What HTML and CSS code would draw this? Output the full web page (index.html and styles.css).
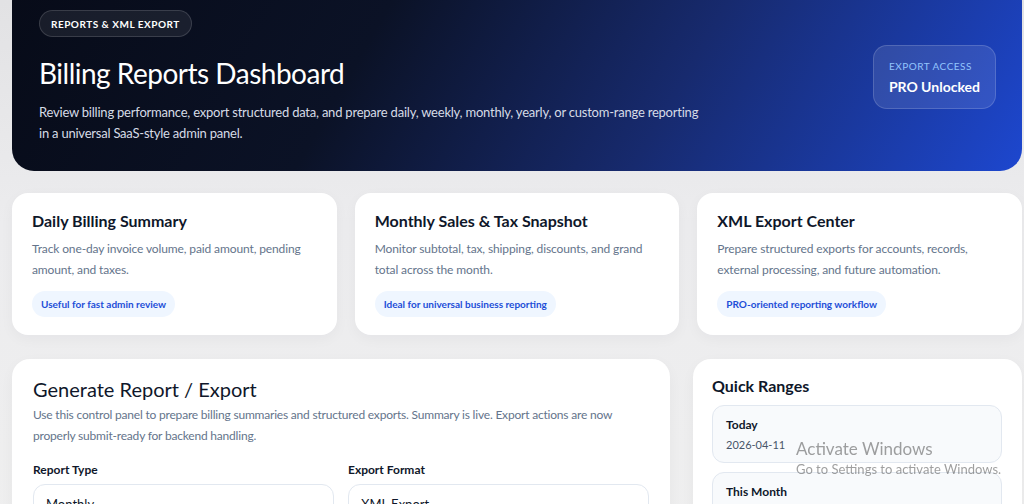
FILE: index.html
```html
<!DOCTYPE html>
<html lang="en">
<head>
    <meta charset="UTF-8">
    <meta name="viewport" content="width=device-width, initial-scale=1.0">
    <title>Billing Reports Dashboard</title>
    <link rel="stylesheet" href="styles.css">
</head>
<body>

    <div class="page">
        <!-- Hero banner -->
        <section class="hero">
            <div class="hero-text">
                <span class="hero-pill">Reports &amp; XML Export</span>
                <h1 class="hero-title">Billing Reports Dashboard</h1>
                <p class="hero-desc">
                    Review billing performance, export structured data, and prepare daily, weekly, monthly, yearly, or custom-range reporting
                    in a universal SaaS-style admin panel.
                </p>
            </div>
            <div class="access-box">
                <div class="access-label">Export Access</div>
                <div class="access-value">PRO Unlocked</div>
            </div>
        </section>

        <!-- Info cards -->
        <div class="info-grid">
            <div class="info-card">
                <h3>Daily Billing Summary</h3>
                <p>Track one-day invoice volume, paid amount, pending amount, and taxes.</p>
                <span class="tag">Useful for fast admin review</span>
            </div>
            <div class="info-card">
                <h3>Monthly Sales &amp; Tax Snapshot</h3>
                <p>Monitor subtotal, tax, shipping, discounts, and grand total across the month.</p>
                <span class="tag">Ideal for universal business reporting</span>
            </div>
            <div class="info-card">
                <h3>XML Export Center</h3>
                <p>Prepare structured exports for accounts, records, external processing, and future automation.</p>
                <span class="tag">PRO-oriented reporting workflow</span>
            </div>
        </div>

        <!-- Report form + quick ranges -->
        <div class="main-grid">
            <div class="panel form-panel">
                <h2>Generate Report / Export</h2>
                <p class="panel-desc">
                    Use this control panel to prepare billing summaries and structured exports. Summary is live. Export actions are now
                    properly submit-ready for backend handling.
                </p>
                <div class="form-row">
                    <div class="field">
                        <label>Report Type</label>
                        <div class="select">Monthly</div>
                    </div>
                    <div class="field">
                        <label>Export Format</label>
                        <div class="select">XML Export</div>
                    </div>
                </div>
            </div>

            <div class="panel ranges-panel">
                <h3>Quick Ranges</h3>
                <div class="range-item">
                    <strong>Today</strong>
                    <span>2026-04-11</span>
                </div>
                <div class="range-item">
                    <strong>This Month</strong>
                    <span>2026-04-01 to 2026-04-30</span>
                </div>
            </div>
        </div>
    </div>

    <div class="activate">
        <div class="activate-title">Activate Windows</div>
        <div class="activate-sub">Go to Settings to activate Windows.</div>
    </div>

</body>
</html>
```

FILE: styles.css
```css
body {
    margin: 0;
    font-family: Lato, "Noto Sans", sans-serif;
    background: linear-gradient(180deg, #e2e2e4 0%, #ececee 40%, #efefef 100%);
    color: #0f172a;
    overflow: hidden;
}

.page {
    margin-top: -20px;
    padding: 0 2px 0 12px;
}

/* hero */
.hero {
    display: flex;
    justify-content: space-between;
    align-items: center;
    padding: 30px 26px 27px 27px;
    border-radius: 22px;
    background: linear-gradient(120deg, #070b18 0%, #0b1226 35%, #172a6e 65%, #1d47cf 100%);
    color: white;
}

.hero-pill {
    display: inline-flex;
    align-items: center;
    height: 25px;
    padding: 0 11px;
    border-radius: 999px;
    background: rgba(255, 255, 255, 0.07);
    border: 1px solid rgba(255, 255, 255, 0.14);
    font-size: 10px;
    font-weight: 700;
    letter-spacing: 0.5px;
    text-transform: uppercase;
}

.hero-title {
    margin: 19px 0 12px;
    font-size: 28px;
    font-weight: 400;
    line-height: 34px;
    letter-spacing: -0.5px;
}

.hero-desc {
    margin: 0;
    max-width: 665px;
    font-size: 13px;
    line-height: 21px;
    letter-spacing: -0.22px;
    color: #d6dbe6;
}

.access-box {
    padding: 14px 15px 13px;
    border-radius: 14px;
    background: rgba(255, 255, 255, 0.1);
    border: 1px solid rgba(255, 255, 255, 0.16);
}

.access-label {
    font-size: 10px;
    letter-spacing: 0.5px;
    text-transform: uppercase;
    color: #93c5fd;
}

.access-value {
    margin-top: 6px;
    font-size: 14px;
    font-weight: 700;
}

/* info cards */
.info-grid {
    display: grid;
    grid-template-columns: repeat(3, 1fr);
    gap: 18px;
    margin-top: 22px;
}

.info-card {
    background: white;
    border-radius: 16px;
    padding: 16px 20px 18px;
    box-shadow: 0 4px 14px rgba(15, 23, 42, 0.04);
}

.info-card h3 {
    margin: 0;
    font-size: 16px;
    font-weight: 700;
    line-height: 24px;
}

.info-card p {
    margin: 5px 0 11px;
    font-size: 12px;
    line-height: 21px;
    letter-spacing: -0.12px;
    color: #64748b;
}

.tag {
    display: inline-flex;
    align-items: center;
    height: 26px;
    padding: 0 9px;
    border-radius: 999px;
    background: #eff6ff;
    color: #1d4ed8;
    font-size: 10px;
    font-weight: 700;
}

/* lower area */
.main-grid {
    display: grid;
    grid-template-columns: 658px 1fr;
    gap: 23px;
    margin-top: 24px;
}

.panel {
    background: white;
    border-radius: 18px;
    box-shadow: 0 4px 14px rgba(15, 23, 42, 0.04);
}

.form-panel {
    padding: 16px 21px 20px;
}

.form-panel h2 {
    margin: 0;
    font-size: 20px;
    font-weight: 400;
    line-height: 28px;
}

.panel-desc {
    margin: 1px 0 16px;
    font-size: 12px;
    line-height: 21px;
    letter-spacing: -0.2px;
    color: #64748b;
}

.form-row {
    display: grid;
    grid-template-columns: 1fr 1fr;
    gap: 14px;
}

.field label {
    display: block;
    font-size: 12px;
    font-weight: 700;
    margin-bottom: 7px;
}

.select {
    height: 46px;
    padding: 11px 12px 0;
    box-sizing: border-box;
    border: 1px solid #e2e8f0;
    border-radius: 12px;
    font-size: 13px;
}

.ranges-panel {
    padding: 15px 20px 20px 19px;
}

.ranges-panel h3 {
    margin: 0 0 7px;
    font-size: 16px;
    font-weight: 700;
    line-height: 24px;
}

.range-item {
    display: flex;
    flex-direction: column;
    gap: 4px;
    padding: 11px 13px 9px;
    margin-bottom: 9px;
    background: #f8fafc;
    border: 1px solid #e2e8f0;
    border-radius: 12px;
}

.range-item strong {
    font-size: 12px;
    line-height: 16px;
}

.range-item span {
    font-size: 11px;
    line-height: 16px;
    color: #475569;
}

/* windows watermark */
.activate {
    position: fixed;
    left: 796px;
    top: 438px;
    color: rgba(80, 80, 80, 0.55);
    pointer-events: none;
}

.activate-title {
    font-size: 17px;
    line-height: 22px;
}

.activate-sub {
    font-size: 13px;
    line-height: 18px;
}
```
